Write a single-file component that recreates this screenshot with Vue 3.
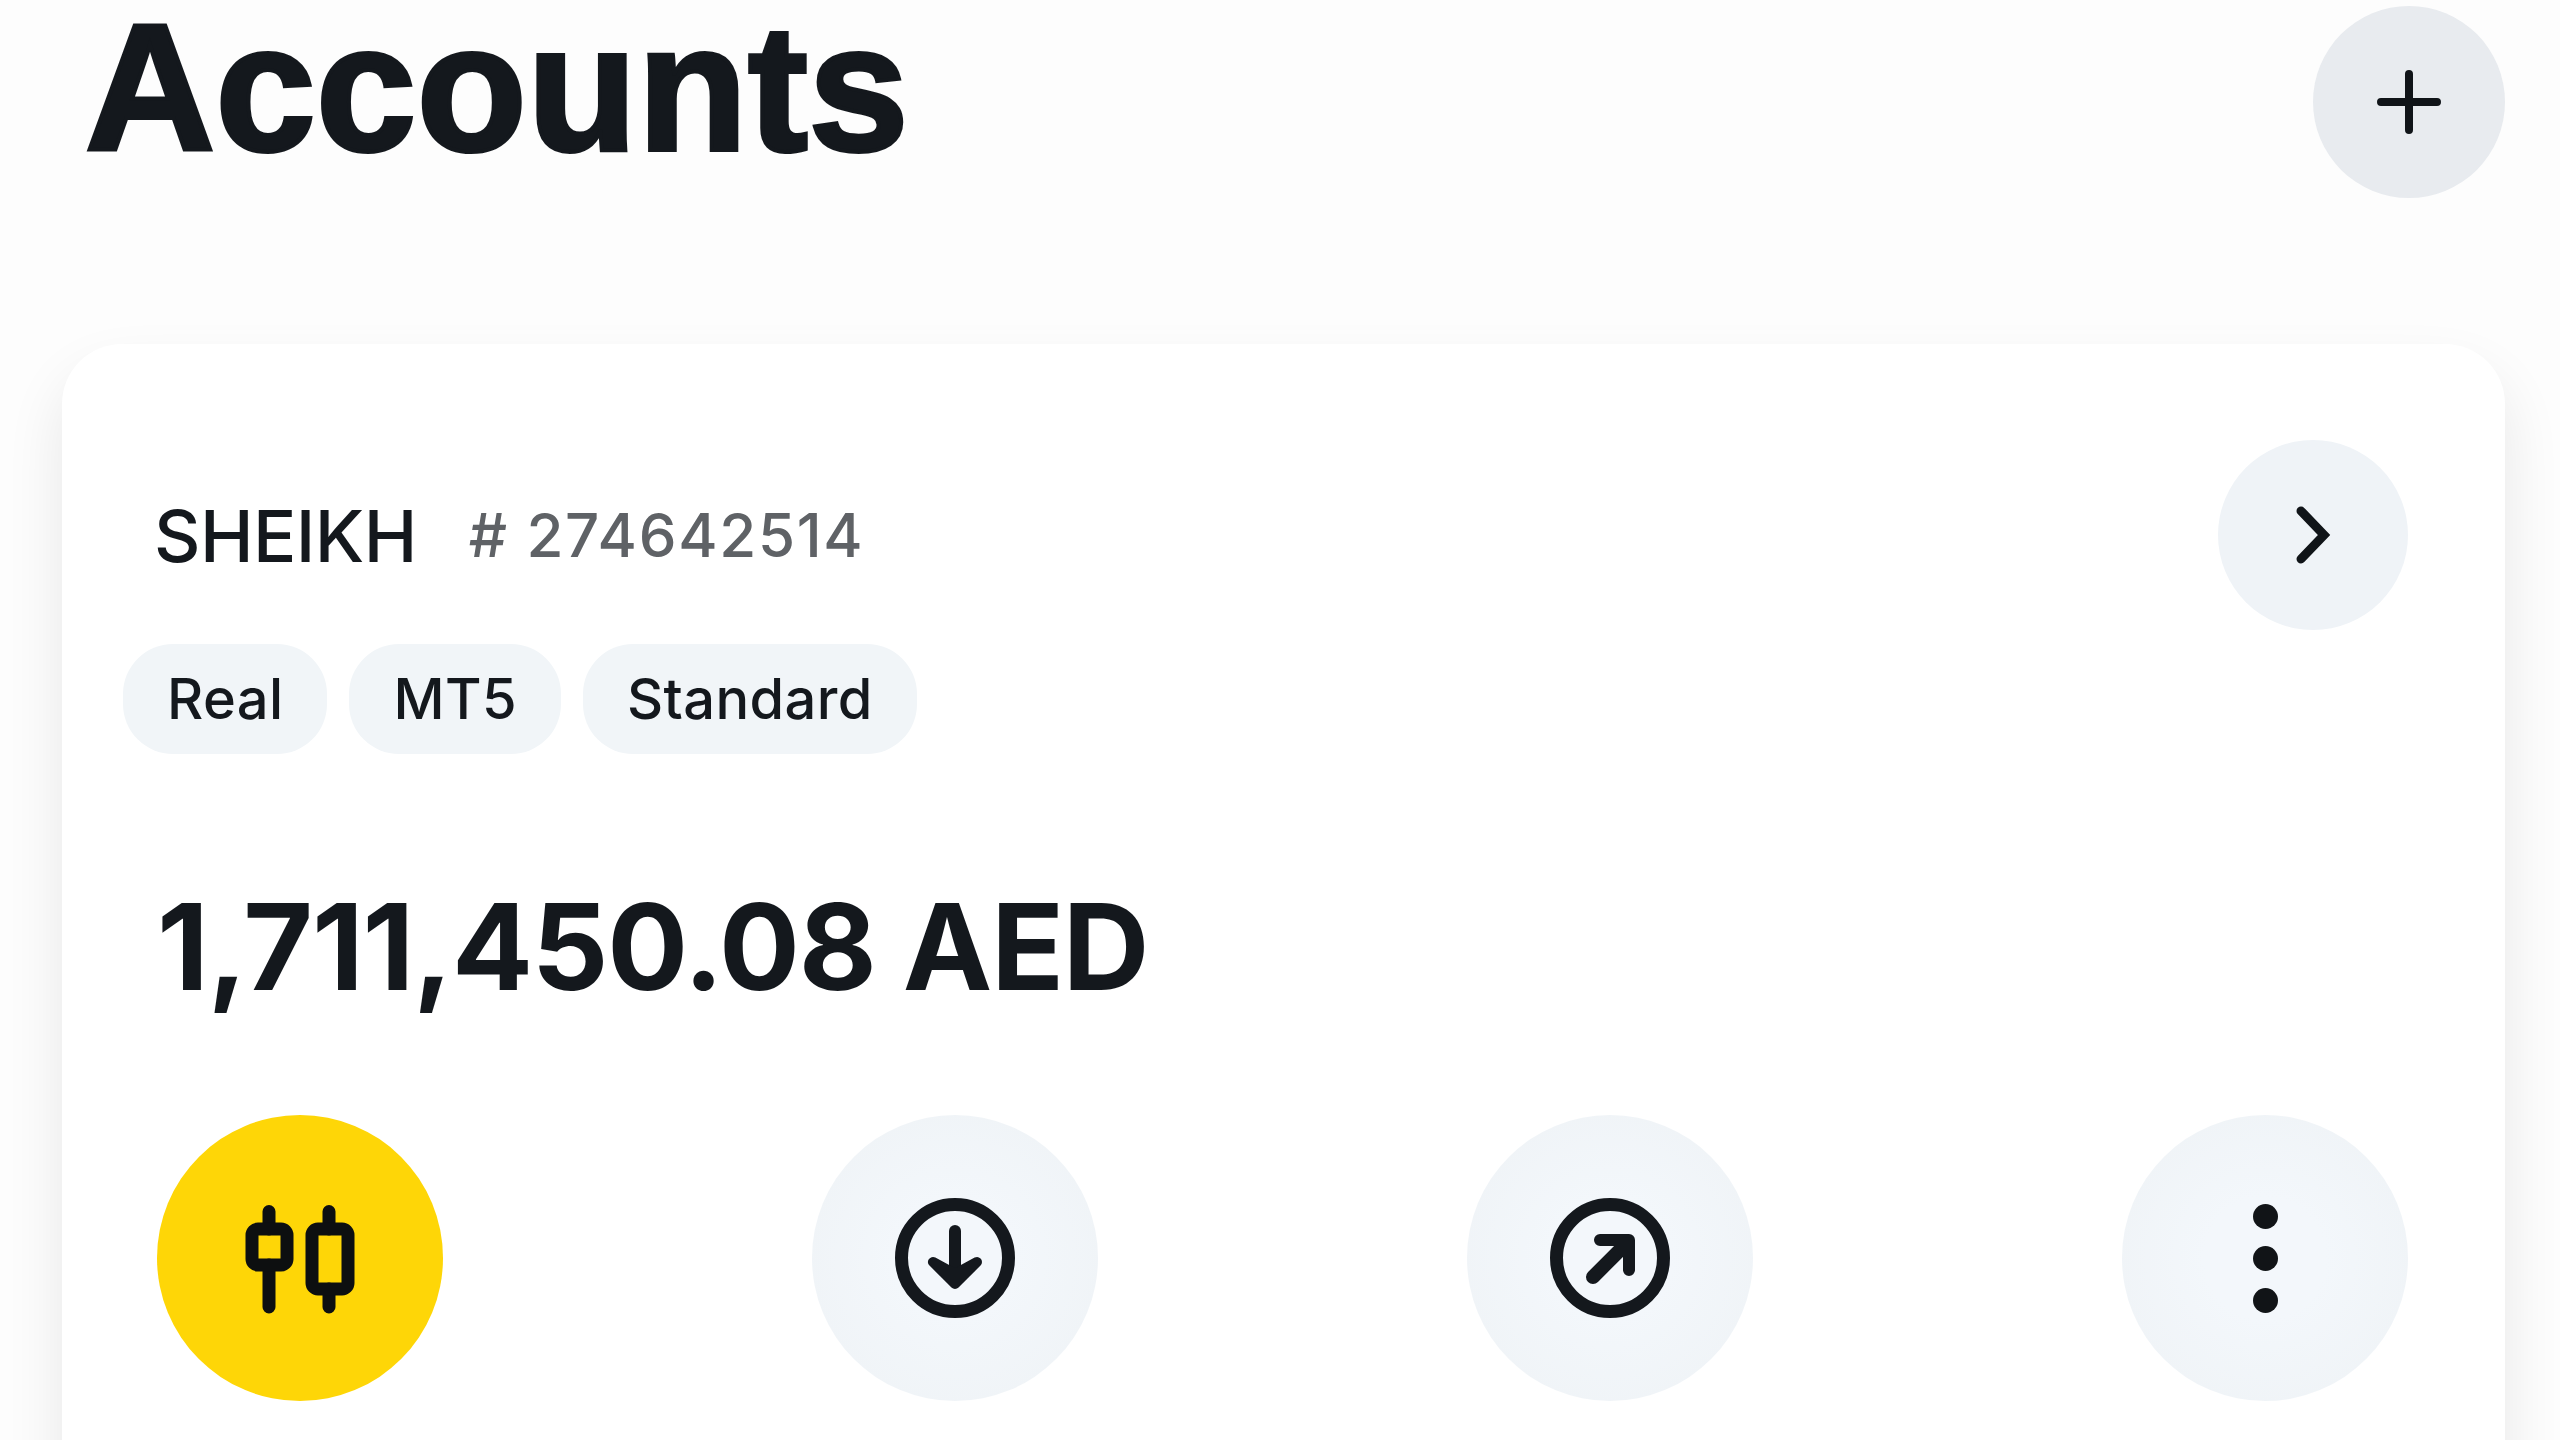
<script setup>
const chips = ['Real', 'MT5', 'Standard']
</script>

<template>
  <main class="page">
    <header class="head">
      <h1 class="title">Accounts</h1>
      <button class="round add" aria-label="Add account">
        <svg width="64" height="64" viewBox="0 0 64 64" fill="none" stroke="#101418" stroke-width="8" stroke-linecap="round">
          <path d="M32 4v56M4 32h56" />
        </svg>
      </button>
    </header>

    <section class="card">
      <div class="top">
        <div class="name">
          <span class="holder">SHEIKH</span>
          <span class="number"># 274642514</span>
        </div>
        <button class="round open" aria-label="Open">
          <svg width="64" height="64" viewBox="0 0 64 64" fill="none" stroke="#101418" stroke-width="9" stroke-linecap="round" stroke-linejoin="miter">
            <path d="M20 8l23 24-23 24" />
          </svg>
        </button>
      </div>

      <ul class="chips">
        <li v-for="chip in chips" :key="chip" class="chip">{{ chip }}</li>
      </ul>

      <p class="balance">1,711,450.08 AED</p>

      <div class="actions">
        <button class="action trade" aria-label="Trade">
          <svg width="180" height="180" viewBox="0 -2 180 180" fill="none" stroke="#0d0f10" stroke-width="13" stroke-linecap="round">
            <path d="M59 41.5V59M59 95v42M119 41.5V59M119 119v18" />
            <rect x="42" y="59" width="35" height="36" rx="6" />
            <rect x="102" y="59" width="36" height="60" rx="6" />
          </svg>
        </button>
        <button class="action" aria-label="Deposit">
          <svg width="120" height="120" viewBox="0 0 120 120" fill="none" stroke="#14181d" stroke-width="13" stroke-linecap="round" stroke-linejoin="round">
            <circle cx="60" cy="60" r="53.5" />
            <path d="M60 33v50" stroke-width="12" />
            <path d="M38 64l22 22 22-22-22 12z" fill="#14181d" stroke-width="10" />
          </svg>
        </button>
        <button class="action" aria-label="Withdraw">
          <svg width="120" height="120" viewBox="0 0 120 120" fill="none" stroke="#14181d" stroke-width="13" stroke-linecap="round" stroke-linejoin="round">
            <circle cx="60" cy="60" r="53.5" />
            <path d="M50 42h29v30" stroke-width="12" />
            <path d="M76 46L43 79" stroke-width="14" />
          </svg>
        </button>
        <button class="action" aria-label="More">
          <span class="dots"><i></i><i></i><i></i></span>
        </button>
      </div>
    </section>
  </main>
</template>

<style>
html, body {
  margin: 0;
  height: 100%;
  overflow: hidden;
  background: #fdfdfd;
}
</style>

<style scoped>
.page {
  box-sizing: border-box;
  height: 1440px;
  padding: 0 55px 0 62px;
  overflow: hidden;
  font-family: Inter, "Liberation Sans", sans-serif;
  color: #14181d;
}
.head {
  display: flex;
  justify-content: space-between;
  align-items: flex-start;
  height: 344px;
}
.title {
  margin: 8px 0 0 23px;
  font-family: "Liberation Sans", Arial, sans-serif;
  font-size: 180px;
  line-height: 160px;
  font-weight: 700;
  letter-spacing: 0.5px;
  -webkit-text-stroke: 4px #14181d;
  color: #14181d;
}
.round {
  display: flex;
  align-items: center;
  justify-content: center;
  padding: 0;
  border: 0;
  border-radius: 50%;
}
.add {
  width: 192px;
  height: 192px;
  margin-top: 6px;
  background: #e8ebef;
}
.card {
  box-sizing: border-box;
  height: 1300px;
  padding: 96px 97px 0 95px;
  background: #fff;
  border-radius: 60px 60px 0 0;
  box-shadow: 0 30px 60px rgba(0, 0, 0, 0.09);
}
.top {
  display: flex;
  justify-content: space-between;
  align-items: center;
}
.name {
  display: flex;
  align-items: center;
  gap: 52px;
  margin-left: -3px;
}
.holder {
  font-size: 72px;
  font-weight: 500;
  letter-spacing: -0.6px;
  color: #14181d;
}
.number {
  font-size: 60px;
  font-weight: 500;
  letter-spacing: 1.7px;
  color: #5f6266;
}
.open {
  width: 190px;
  height: 190px;
  background: #eff3f7;
}
.chips {
  display: flex;
  gap: 22px;
  margin: 14px 0 0 -34px;
  padding: 0;
  list-style: none;
}
.chip {
  display: flex;
  align-items: center;
  height: 110px;
  padding: 0 44px;
  border-radius: 50px;
  background: #f1f5f8;
  font-size: 56px;
  font-weight: 500;
  letter-spacing: 0.4px;
  color: #14181d;
}
.balance {
  margin: 120px 0 0;
  font-size: 120px;
  line-height: 145px;
  font-weight: 700;
  letter-spacing: -1.2px;
  color: #14181d;
}
.actions {
  display: flex;
  justify-content: space-between;
  margin-top: 96px;
}
.action {
  display: flex;
  align-items: center;
  justify-content: center;
  width: 286px;
  height: 286px;
  padding: 0;
  border: 0;
  border-radius: 50%;
  background: radial-gradient(circle, #f3f7fb 30%, #eef2f5 100%);
}
.trade {
  background: #fed607;
}
.dots {
  display: flex;
  flex-direction: column;
  gap: 17px;
}
.dots i {
  display: block;
  width: 25px;
  height: 25px;
  border-radius: 50%;
  background: #111417;
}
</style>
